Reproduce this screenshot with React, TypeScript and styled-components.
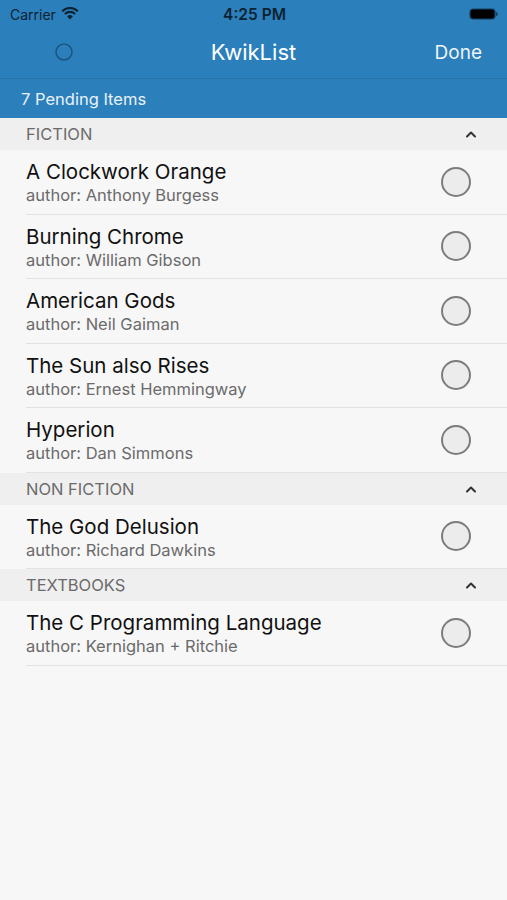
import React from "react";
import styled, { createGlobalStyle } from "styled-components";

interface IBook {
  title: string;
  author: string;
}

interface ISection {
  name: string;
  books: IBook[];
}

const sections: ISection[] = [
  {
    name: "FICTION",
    books: [
      { title: "A Clockwork Orange", author: "Anthony Burgess" },
      { title: "Burning Chrome", author: "William Gibson" },
      { title: "American Gods", author: "Neil Gaiman" },
      { title: "The Sun also Rises", author: "Ernest Hemmingway" },
      { title: "Hyperion", author: "Dan Simmons" }
    ]
  },
  {
    name: "NON FICTION",
    books: [{ title: "The God Delusion", author: "Richard Dawkins" }]
  },
  {
    name: "TEXTBOOKS",
    books: [{ title: "The C Programming Language", author: "Kernighan + Ritchie" }]
  }
];

export default function App() {
  const pending = sections.reduce((n, s) => n + s.books.length, 0);

  return (
    <Screen>
      <GlobalStyle />
      <Header>
        <StatusBar>
          <Carrier>
            Carrier
            <svg width="18" height="13" viewBox="0 0 18 13">
              <path d="M9 12.5 L6.2 9.4 A4 4 0 0 1 11.8 9.4 Z" fill="#0d2233" />
              <path d="M3.9 7 A7.3 7.3 0 0 1 14.1 7" stroke="#0d2233" strokeWidth="2.2" fill="none" />
              <path d="M1.2 4.2 A11 11 0 0 1 16.8 4.2" stroke="#0d2233" strokeWidth="2.2" fill="none" />
            </svg>
          </Carrier>
          <Clock>4:25 PM</Clock>
          <Battery>
            <svg width="30" height="12" viewBox="0 0 30 12">
              <rect x="1" y="1" width="25" height="10" rx="3" fill="#000" stroke="#16405f" strokeWidth="1.2" />
              <rect x="27" y="4" width="1.6" height="4" rx="0.8" fill="#16405f" />
            </svg>
          </Battery>
        </StatusBar>
        <NavBar>
          <NavSide>
            <svg width="20" height="20" viewBox="0 0 20 20">
              <circle cx="10" cy="10" r="8" fill="none" stroke="#1d5580" strokeWidth="1.6" />
            </svg>
          </NavSide>
          <NavTitle>KwikList</NavTitle>
          <NavButton>Done</NavButton>
        </NavBar>
        <PendingBar>{pending} Pending Items</PendingBar>
      </Header>
      <List>
        {sections.map((section) => (
          <React.Fragment key={section.name}>
            <SectionHeader>
              <span>{section.name}</span>
              <svg width="12" height="8" viewBox="0 0 12 8">
                <path d="M2 6.5 L6 2.5 L10 6.5" fill="none" stroke="#333" strokeWidth="2" strokeLinecap="round" strokeLinejoin="round" />
              </svg>
            </SectionHeader>
            {section.books.map((book) => (
              <Row key={book.title}>
                <RowText>
                  <Title>{book.title}</Title>
                  <Author>author: {book.author}</Author>
                </RowText>
                <Check />
              </Row>
            ))}
          </React.Fragment>
        ))}
      </List>
    </Screen>
  );
}

const GlobalStyle = createGlobalStyle`
  body {
    margin: 0;
    background: #f7f7f7;
    font-family: Inter, "Liberation Sans", sans-serif;
  }
`;

const Screen = styled.div`
  width: 507px;
  min-height: 900px;
  background: #f7f7f7;
`;

const Header = styled.div`
  background: #2b80bb;
`;

const StatusBar = styled.div`
  height: 28px;
  display: grid;
  grid-template-columns: 1fr auto 1fr;
  align-items: center;
  padding: 0 8px 0 10px;
  color: #0d2233;
`;

const Carrier = styled.div`
  display: flex;
  align-items: center;
  gap: 5px;
  font-size: 14px;
  svg {
    margin-top: -2px;
  }
`;

const Clock = styled.div`
  font-weight: 600;
  font-size: 15.5px;
`;

const Battery = styled.div`
  display: flex;
  justify-content: flex-end;
`;

const NavBar = styled.div`
  height: 51px;
  box-sizing: border-box;
  display: grid;
  grid-template-columns: 1fr auto 1fr;
  align-items: center;
  padding-bottom: 2px;
  border-bottom: 1px solid #2572a8;
  color: #fff;
`;

const NavSide = styled.div`
  display: flex;
  padding-left: 54px;
`;

const NavTitle = styled.div`
  font-size: 22px;
`;

const NavButton = styled.div`
  justify-self: end;
  padding-right: 25px;
  font-size: 19px;
  color: #eef4fa;
`;

const PendingBar = styled.div`
  height: 39px;
  display: flex;
  align-items: center;
  padding-left: 21px;
  font-size: 16.5px;
  color: #e9f2fa;
`;

const List = styled.div`
  display: flex;
  flex-direction: column;
`;

const SectionHeader = styled.div`
  height: 32px;
  display: flex;
  align-items: center;
  justify-content: space-between;
  padding: 0 30px 0 26px;
  background: #efefef;
  font-size: 16.5px;
  color: #6b6b6b;
`;

const Row = styled.div`
  height: 64.5px;
  box-sizing: border-box;
  margin-left: 26px;
  padding-right: 36px;
  display: flex;
  align-items: center;
  justify-content: space-between;
  border-bottom: 1px solid #e2e2e2;
`;

const RowText = styled.div`
  display: flex;
  flex-direction: column;
  gap: 1px;
  padding-top: 2px;
`;

const Title = styled.div`
  font-size: 20.5px;
  line-height: 24px;
  color: #111;
`;

const Author = styled.div`
  font-size: 16.5px;
  line-height: 20px;
  color: #6b6b6b;
`;

const Check = styled.div`
  width: 26px;
  height: 26px;
  border-radius: 50%;
  border: 2px solid #7c7c7c;
  background: #ececec;
`;
